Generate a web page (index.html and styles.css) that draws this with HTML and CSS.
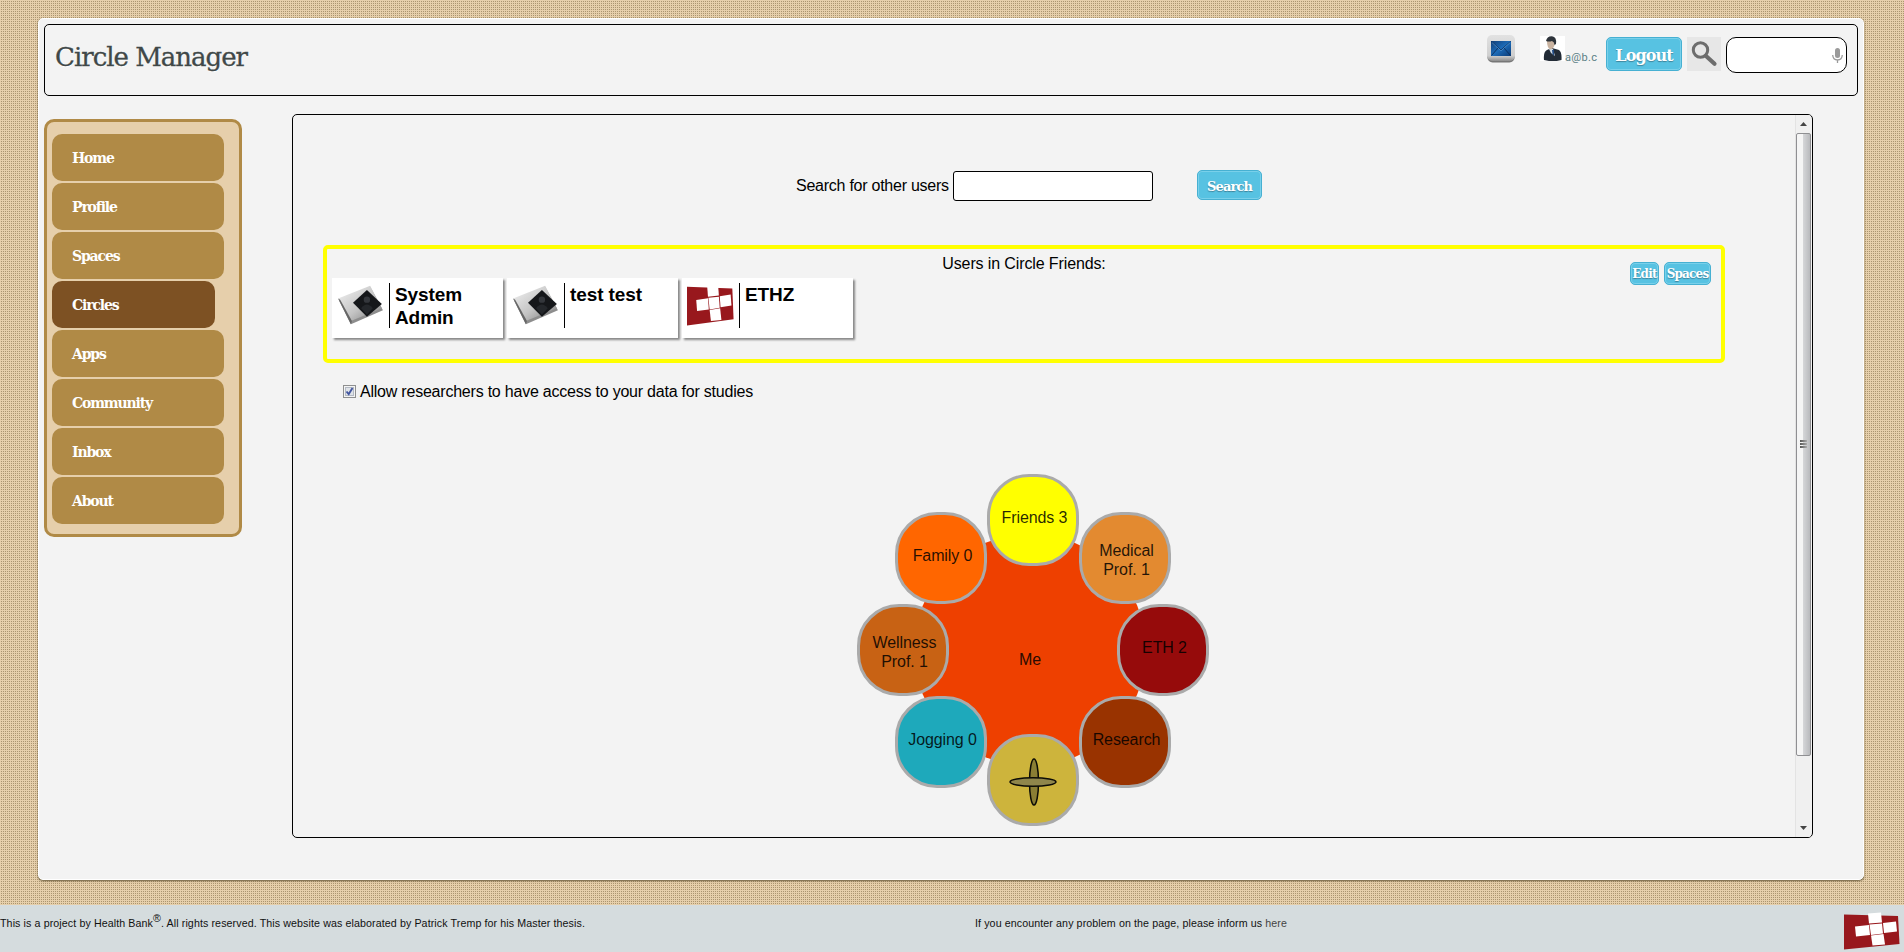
FILE: index.html
```html
<!DOCTYPE html>
<html lang="en">
<head>
<meta charset="utf-8">
<title>Circle Manager</title>
<link rel="stylesheet" href="styles.css">
</head>
<body>
<svg class="defs" width="0" height="0">
  <defs>
    <linearGradient id="silver" x1="0" y1="0" x2="1" y2="1"><stop offset="0" stop-color="#f4f4f4"/><stop offset=".55" stop-color="#c4c4c4"/><stop offset="1" stop-color="#777"/></linearGradient>
    <linearGradient id="key" x1="0" y1="0" x2="0" y2="1"><stop offset="0" stop-color="#e2e2e2"/><stop offset=".8" stop-color="#cfcfcf"/><stop offset="1" stop-color="#8d8d8d"/></linearGradient>
    <linearGradient id="mail" x1="0" y1="0" x2="1" y2="1"><stop offset="0" stop-color="#123f78"/><stop offset=".5" stop-color="#1c6bb8"/><stop offset="1" stop-color="#0b3c78"/></linearGradient>
    <symbol id="folder" viewBox="0 0 44 38">
      <path d="M2 15 L31 2 L43 24 L13 37 Z" fill="#8d8d8d"/>
      <path d="M1 13 L31 1 L42 22 L13 34 Z" fill="url(#silver)"/>
      <path d="M1 13 L3 14 L14 34 L13 37 Z" fill="#666"/>
      <path d="M28 5 L42 18 L28 30 L15 17 Z" fill="#15171a"/>
      <circle cx="28" cy="14" r="3" fill="#34373c"/><path d="M22.500 22 Q28 15 33.500 22 L28 28Z" fill="#24272b"/>
    </symbol>
    <symbol id="cross" viewBox="0 0 56 38" preserveAspectRatio="none">
      <path d="M0 2.500 L54 4 L55.500 32 L0 37.500 Z" fill="#98181d"/>
      <g fill="#fff"><path d="M24 1.500 L37 .5 L38 10.500 L25 11.500Z"/><path d="M11 14.500 L25 13 L26 23 L12 24.500Z"/><path d="M25.500 12.500 L38 11.500 L39 21.500 L27 23Z"/><path d="M39 11 L52 9.500 L53 19.500 L40 21Z"/><path d="M27 23.500 L39.500 22 L41 32.500 L28.500 33.500Z"/></g>
    </symbol>
  </defs>
</svg>

<div class="page">
  <header class="header">
    <h1 class="title">Circle Manager</h1>
    <div class="tools">
      <svg class="mail" viewBox="0 0 28 28"><rect x=".5" y="2" width="27" height="25.500" rx="5" fill="#777"/><rect x="0" y="0" width="28" height="26" rx="5" fill="url(#key)"/><rect x="4" y="6" width="20" height="15" fill="url(#mail)"/><path d="M4.500 6.500 L14 15 L23.500 6.500 M4.500 20.500 L11 13 M23.500 20.500 L17 13" fill="none" stroke="#0a2c5a" stroke-width=".9"/><path d="M5 7.500 L14 15.800 L23 7.500" fill="none" stroke="#78b4e8" stroke-width=".5"/></svg>
      <svg class="user" viewBox="0 0 25 25"><rect width="25" height="25" fill="#fff"/><path d="M4 24 Q3 15 8 13.500 L12 12 L19 14 Q22 16 21.500 24 Q13 26.500 4 24Z" fill="#222b36"/><path d="M9 13 L13 13 L15 20 L11 17Z" fill="#cfdbe6"/><path d="M12 14 L14 14 L14 20 L12.500 18Z" fill="#234a80"/><path d="M7 5 Q7 12 10.500 13.500 Q14.500 13 15 6 L12 3Z" fill="#c9b3a0"/><path d="M6 5 Q7 0 12 .3 Q17 1 16 8 L14.500 9 Q14.500 6 12 5 Q9 6 6 5Z" fill="#2d333a"/></svg>
      <span class="email">a@b.c</span>
      <button class="btn logout">Logout</button>
      <svg class="glass" viewBox="0 0 34 34"><rect width="34" height="34" fill="#e7e7e7"/><circle cx="13.500" cy="13" r="7.200" fill="none" stroke="#6d6d6d" stroke-width="3"/><path d="M19 19 L27.500 26.800" stroke="#6d6d6d" stroke-width="4.200" stroke-linecap="round"/></svg>
      <div class="query"><svg class="mic" viewBox="0 0 11 16"><rect x="3" y="0" width="5" height="10" rx="2.500" fill="#9a9a9a"/><path d="M.7 7 Q1 12 5.500 12 Q10 12 10.300 7 M5.500 12 V15" fill="none" stroke="#9a9a9a" stroke-width="1.300"/></svg></div>
    </div>
  </header>

  <div class="columns">
    <nav class="nav">
      <a class="item">Home</a>
      <a class="item">Profile</a>
      <a class="item">Spaces</a>
      <a class="item current">Circles</a>
      <a class="item">Apps</a>
      <a class="item">Community</a>
      <a class="item">Inbox</a>
      <a class="item">About</a>
    </nav>

    <main class="panel">
      <div class="content">
        <div class="search">
          <span class="search-label">Search for other users</span>
          <input class="search-input" type="text">
          <button class="btn find">Search</button>
        </div>

        <section class="members">
          <p class="members-title">Users in Circle Friends:</p>
          <div class="actions"><button class="btn small">Edit</button><button class="btn small">Spaces</button></div>
          <div class="cards">
            <div class="card"><svg class="avatar"><use href="#folder"/></svg><h3 class="name">System Admin</h3></div>
            <div class="card"><svg class="avatar"><use href="#folder"/></svg><h3 class="name">test test</h3></div>
            <div class="card"><svg class="avatar"><use href="#cross"/></svg><h3 class="name">ETHZ</h3></div>
          </div>
        </section>

        <div class="consent">
          <svg class="check" viewBox="0 0 13 13"><rect x=".5" y=".5" width="12" height="12" fill="#f4f4f4" stroke="#8e8f8f"/><rect x="2.500" y="2.500" width="8" height="8" fill="#dfe3e8" stroke="#b4bac4"/><path d="M3.500 6.500 L5.700 9.200 L9.500 3" fill="none" stroke="#4356a0" stroke-width="1.900"/></svg>
          <span class="consent-text">Allow researchers to have access to your data for studies</span>
        </div>

        <div class="wheel">
          <div class="hub"></div><span class="me">Me</span>
          <div class="circle friends">Friends 3</div>
          <div class="circle medical">Medical<br>Prof. 1</div>
          <div class="circle eth">ETH 2</div>
          <div class="circle research">Research</div>
          <div class="circle add"><svg class="plus" viewBox="0 0 50 50"><g fill="#1e2828" fill-opacity=".38" stroke="#0c0c06" stroke-width="1.500"><ellipse cx="25" cy="25" rx="4.500" ry="23"/></g><ellipse cx="24" cy="25" rx="23" ry="4.200" fill="#8f864b" stroke="#0c0c06" stroke-width="1.500"/></svg></div>
          <div class="circle jogging">Jogging 0</div>
          <div class="circle wellness">Wellness<br>Prof. 1</div>
          <div class="circle family">Family 0</div>
        </div>
      </div>
      <div class="scrollbar">
        <svg class="arrow" viewBox="0 0 7 4"><path d="M0 4 L3.500 0 L7 4Z" fill="#444"/></svg>
        <div class="thumb"><i class="grip"></i><i class="grip"></i><i class="grip"></i></div>
        <svg class="arrow down" viewBox="0 0 7 4"><path d="M0 0 L3.500 4 L7 0Z" fill="#444"/></svg>
      </div>
    </main>
  </div>
</div>

<footer class="footer">
  <p class="legal">This is a project by Health Bank<sup class="reg">®</sup>. All rights reserved. This website was elaborated by Patrick Tremp for his Master thesis.</p>
  <p class="help">If you encounter any problem on the page, please inform us <a class="here">here</a></p>
  <svg class="logo"><use href="#cross"/></svg>
</footer>
</body>
</html>
```
FILE: styles.css
```css
* { box-sizing: border-box; }
body {
  margin: 0;
  height: 952px;
  overflow: hidden;
  display: flex;
  flex-direction: column;
  font: 16px/19px "Liberation Sans", Arial, sans-serif;
  color: #000;
  background-color: #e6cfab;
  background-image: conic-gradient(from 90deg at 1px 1px, #ab9570 25%, #e6cfab 0);
  background-size: 2px 2px;
}
.defs { position: absolute; }
p, h1, h3 { margin: 0; }

.page {
  width: 1826px;
  height: 862px;
  margin: 18px 0 25px 38px;
  padding: 5px;
  flex: none;
  background: #f3f3f3;
  border: 1px solid #fff;
  border-radius: 5px;
  box-shadow: 0 1px 2px rgba(60, 50, 20, .75);
}
.header {
  height: 72px;
  display: flex;
  justify-content: space-between;
  align-items: flex-start;
  border: 1px solid #000;
  border-radius: 5px;
  padding: 10px 10px 0 10px;
}
.title {
  margin-top: 2px;
  font: 400 26px/40px "DejaVu Serif", serif;
  letter-spacing: -1px;
  color: #404848;
  -webkit-text-stroke: .3px #404848;
  text-shadow: 0 1px 1px #fff;
  white-space: nowrap;
}
.tools { display: flex; align-items: flex-start; }
.mail { width: 28px; height: 28px; margin: 0 25px 0 0; }
.user { width: 25px; height: 25px; margin-top: 1px; }
.email { width: 33px; margin: 14px 8px 0 0; font: 11px/18px Roboto, sans-serif; letter-spacing: .35px; color: #5b7f86; }
.btn {
  margin: 0;
  padding: 2px 0 0;
  border: 1px solid #46b0d2;
  border-radius: 5px;
  background: #57c2e2;
  box-shadow: inset 0 0 0 1px #79d0ea;
  color: #fff;
  text-align: center;
  white-space: nowrap;
  font-family: "DejaVu Serif", serif;
  font-weight: 700;
  text-shadow: 0 1px 1px #3f8299;
}
.logout { width: 76px; height: 34px; margin-top: 2px; font-size: 16px; letter-spacing: -.9px; }
.glass { width: 34px; height: 34px; margin: 2px 5px 0; }
.query {
  width: 121px;
  height: 36px;
  margin-top: 2px;
  padding-right: 3px;
  display: flex;
  align-items: center;
  justify-content: flex-end;
  background: #fff;
  border: 1px solid #000;
  border-radius: 10px;
}
.mic { width: 11px; height: 16px; margin-top: 1px; }

.columns { display: flex; align-items: flex-start; }
.nav {
  width: 198px;
  height: 418px;
  margin: 23px 50px 0 0;
  padding: 12px 5px;
  display: flex;
  flex-direction: column;
  gap: 2px;
  flex: none;
  background: #e6cfab;
  border: 3px solid #b08a46;
  border-radius: 10px;
}
.item {
  width: 172px;
  height: 47px;
  padding-left: 20px;
  border-radius: 10px;
  background: #b08a46;
  color: #fff;
  font: 700 14px/48px "DejaVu Serif", serif;
  letter-spacing: -1.15px;
}
.current { width: 163px; background: #7d5123; }

.panel {
  width: 1521px;
  height: 724px;
  margin-top: 18px;
  display: flex;
  overflow: hidden;
  border: 1px solid #000;
  border-radius: 5px;
}
.content { width: 1502px; flex: none; padding: 55px 0 0 30px; }
.search { display: flex; align-items: center; height: 30px; padding-left: 473px; }
.search-label { width: 157px; white-space: nowrap; letter-spacing: -.25px; }
.search-input { width: 200px; height: 30px; margin: 2px 44px 0 0; border: 1px solid #000; border-radius: 3px; background: #fff; }
.find { width: 65px; height: 30px; font-size: 13px; letter-spacing: -.9px; }
.members {
  position: relative;
  width: 1402px;
  height: 118px;
  margin-top: 45px;
  padding: 4px 5px;
  border: 4px solid #ff0;
  border-radius: 5px;
}
.members-title { height: 25px; line-height: 22px; text-align: center; letter-spacing: -.12px; }
.actions { position: absolute; top: 13px; right: 10px; display: flex; gap: 5px; }
.small { height: 23px; padding: 1px 0 0; font-size: 12px; letter-spacing: -.8px; }
.small:first-child { width: 29px; }
.small:last-child { width: 47px; }
.cards { display: flex; gap: 4.5px; }
.card {
  width: 170.5px;
  height: 60px;
  padding: 5px 5px 0;
  display: flex;
  background: #fff;
  box-shadow: 2px 2px 2px #888;
}
.avatar { width: 47px; height: 42px; margin: 1px 5px 0 0; flex: none; }
.name { height: 45px; padding-left: 5px; border-left: 1px solid #000; font-size: 19px; line-height: 23px; letter-spacing: -.1px; }
.consent { display: flex; align-items: center; height: 20px; margin: 18px 0 0 20px; }
.consent-text { letter-spacing: -.22px; }
.check { width: 13px; height: 13px; margin-right: 4px; }

.wheel { position: relative; width: 352px; height: 352px; margin: 73px 0 0 534px; }
.hub { position: absolute; left: 57px; top: 60px; width: 232px; height: 232px; border-radius: 50%; background: #ee4000; }
.me { position: absolute; left: 162px; top: 176px; color: #2b0b00; letter-spacing: -.2px; }
.circle {
  position: absolute;
  width: 92px;
  height: 92px;
  padding: 31px 0 0 3px;
  border: 3px solid #aaa;
  border-radius: 42px;
  text-align: center;
  white-space: nowrap;
  letter-spacing: -.1px;
  color: rgba(0, 0, 0, .85);
}
.friends { left: 130px; top: 0; background: #ff0; }
.medical { left: 222px; top: 38px; padding-top: 26px; background: #e38a30; }
.eth { left: 260px; top: 130px; background: #960b0b; }
.research { left: 222px; top: 222px; background: #993300; }
.add { left: 130px; top: 260px; padding: 20px 0 0 2px; background: #cdb43c; }
.jogging { left: 38px; top: 222px; background: #1ea9bb; }
.wellness { left: 0; top: 130px; padding-top: 26px; background: #c86214; }
.family { left: 38px; top: 38px; background: #f60; }
.plus { display: block; width: 50px; height: 50px; margin: 0 auto; }

.scrollbar {
  width: 16px;
  height: 722px;
  display: flex;
  flex-direction: column;
  align-items: center;
  background: #f0f0f0;
  border-left: 1px solid #e3e3e3;
}
.arrow { width: 7px; height: 4px; margin: 7px 0; flex: none; }
.thumb {
  width: 15px;
  height: 623px;
  flex: none;
  display: flex;
  flex-direction: column;
  align-items: center;
  justify-content: center;
  gap: 1px;
  padding-bottom: 2px;
  border: 1px solid #8f8f92;
  border-radius: 2px;
  background: linear-gradient(90deg, #f5f5f5 0 6px, #d6d7d9 6px, #b9babd);
}
.grip { width: 7px; height: 2px; background: linear-gradient(90deg, #555, #aaa); }
.down { margin: auto 0 7px; }

.footer {
  flex: 1;
  display: flex;
  background: #d5dcde;
  color: #111;
  font: 10.667px/14px "Liberation Sans", Arial, sans-serif;
  letter-spacing: .1px;
}
.legal { width: 975px; padding-top: 11px; white-space: nowrap; line-height: 14px; }
.reg { font-size: 10.667px; line-height: 0; }
.help { padding-top: 11px; white-space: nowrap; }
.here { color: #444; }
.logo { width: 56px; height: 38px; margin: 7px 4px 0 auto; }
```
